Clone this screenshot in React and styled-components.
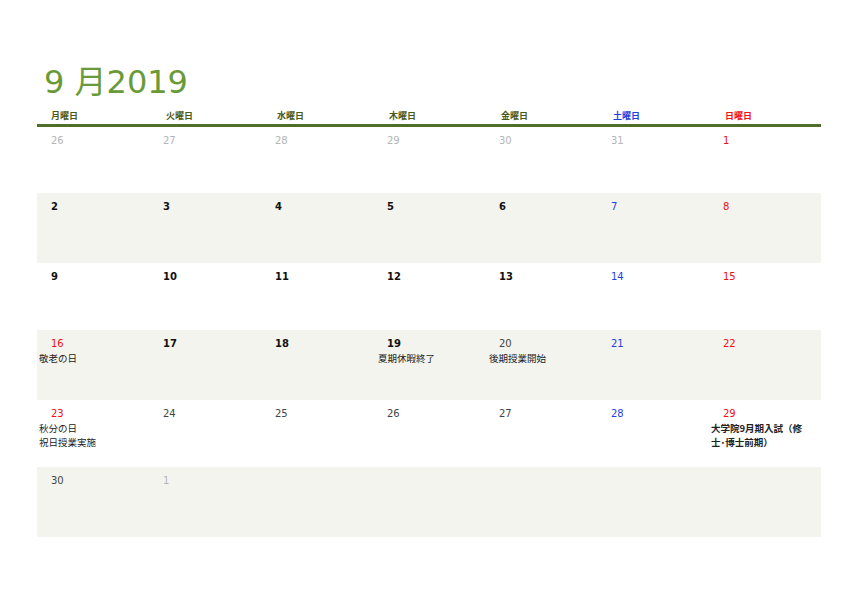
import React from "react";
import styled, { createGlobalStyle } from "styled-components";

const G = createGlobalStyle`
  body{margin:0;background:#fff;font-family:Tahoma,"DejaVu Sans","Noto Sans CJK JP",sans-serif;}
`;
const Page = styled.div`padding:60px 21px 0 37px;width:784px;`;
const Title = styled.h1`margin:0 0 0 7px;font-weight:normal;font-size:32px;line-height:44px;color:#6a9a38;font-family:"DejaVu Sans","Noto Sans CJK JP",sans-serif;`;
const Head = styled.div`display:grid;grid-template-columns:repeat(7,112px);border-bottom:3px solid #4f6f28;margin-top:5px;`;
const HCell = styled.div`font-size:9px;font-weight:bold;padding:0 0 1px ${p=>p.$i===0?14:p.$i===1?17:16}px;color:${p=>p.$c};font-family:"Noto Sans CJK JP",sans-serif;line-height:14px;`;
const Row = styled.div`display:grid;grid-template-columns:repeat(7,112px);height:${p=>p.$h}px;background:${p=>p.$alt?"#f4f4ee":"#fff"};`;
const Cell = styled.div`padding-top:7px;`;
const Num = styled.div`font-size:10px;font-family:"DejaVu Sans",sans-serif;padding-left:14px;line-height:14px;color:${p=>p.$c};font-weight:${p=>p.$b?"bold":"normal"};`;
const Ev = styled.div`font-size:9.5px;line-height:14px;font-family:"Noto Sans CJK JP",sans-serif;color:#222;padding-left:${p=>p.$pl}px;padding-right:6px;font-weight:${p=>p.$b?"bold":"normal"};`;

const heads=[["月曜日","#4a5a18"],["火曜日","#4a5a18"],["水曜日","#4a5a18"],["木曜日","#4a5a18"],["金曜日","#4a5a18"],["土曜日","#1f3fe0"],["日曜日","#ee1111"]];
const grey="#b5b5b5",blk="#111",nm="#444",blue="#1f3fe0",red="#ee1111";
const rows=[
 {h:66,d:[[26,grey],[27,grey],[28,grey],[29,grey],[30,grey],[31,grey],[1,red]]},
 {h:70,alt:1,d:[[2,blk,1],[3,blk,1],[4,blk,1],[5,blk,1],[6,blk,1],[7,blue],[8,red]]},
 {h:67,d:[[9,blk,1],[10,blk,1],[11,blk,1],[12,blk,1],[13,blk,1],[14,blue],[15,red]]},
 {h:70,alt:1,d:[[16,red,0,["敬老の日"],2],[17,blk,1],[18,blk,1],[19,blk,1,["夏期休暇終了"],5],[20,nm,0,["後期授業開始"],4],[21,blue],[22,red]]},
 {h:67,d:[[23,red,0,["秋分の日","祝日授業実施"],2],[24,nm],[25,nm],[26,nm],[27,nm],[28,blue],[29,red,0,["大学院9月期入試（修士･博士前期）"],2,1]]},
 {h:70,alt:1,d:[[30,nm],[1,grey],[],[],[],[],[]]},
];

export default function App(){
  return <><G/><Page>
    <Title>9 月2019</Title>
    <Head>{heads.map(([t,c],i)=><HCell key={i} $i={i} $c={c}>{t}</HCell>)}</Head>
    {rows.map((r,ri)=><Row key={ri} $h={r.h} $alt={r.alt}>
      {r.d.map((d,i)=><Cell key={i}>{d.length>0&&<Num $c={d[1]} $b={d[2]}>{d[0]}</Num>}
        {d[3]&&d[3].map((e,j)=><Ev key={j} $pl={d[4]} $b={d[5]}>{e}</Ev>)}</Cell>)}
    </Row>)}
  </Page></>;
}
